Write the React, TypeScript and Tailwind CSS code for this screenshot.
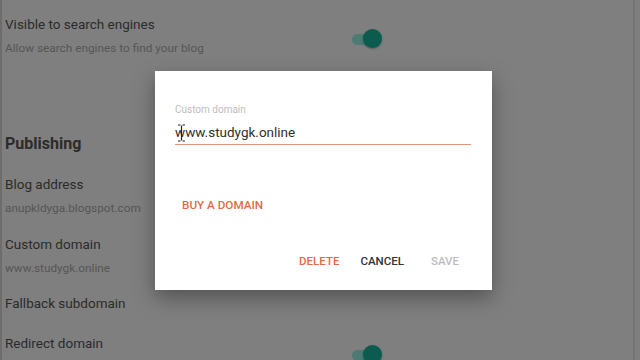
import React from 'react'

type SettingRowProps = {
  title: string
  subtitle?: string
  className?: string
}

function SettingRow({ title, subtitle, className = '' }: SettingRowProps) {
  return (
    <div className={`flex flex-col ${className}`}>
      <p className="text-[13.5px] leading-[20px] text-[#2b2b2b]">{title}</p>
      {subtitle && <p className="mt-[4px] text-[11.8px] leading-[20px] text-[#565656]">{subtitle}</p>}
    </div>
  )
}

function Toggle() {
  return (
    <div className="relative w-[31px] h-[20px] shrink-0">
      <div className="absolute left-[1px] top-[5px] w-[24px] h-[11px] rounded-full bg-[#4b7b72]" />
      <div className="absolute right-0 top-0 w-[19px] h-[19px] rounded-full bg-[#0b5c4f] shadow-[0_1px_2px_rgba(0,0,0,0.3)]" />
    </div>
  )
}

function TextCursor() {
  return (
    <svg className="absolute left-[2px] top-[4px]" width="9" height="18" viewBox="0 0 9 18">
      <path d="M1 1h2.5M5.5 1H8M4.5 1.5v15M1 17h2.5M5.5 17H8" stroke="#222" strokeWidth="1.2" fill="none" />
    </svg>
  )
}

export default function App() {
  return (
    <div
      className="relative w-[640px] h-[360px] overflow-hidden bg-[#7f7f7f] border-l-2 border-[#6d6d6d]"
      style={{ fontFamily: 'Roboto, "Noto Sans", sans-serif' }}
    >
      {/* page behind the overlay */}
      <div className="w-[633px] h-full border-r-2 border-[#747474] flex flex-col pl-[3px]">
        <div className="w-[377px] flex items-start justify-between pt-[14px]">
          <SettingRow title="Visible to search engines" subtitle="Allow search engines to find your blog" />
          <div className="mt-[15px]">
            <Toggle />
          </div>
        </div>

        <div className="mt-[31px] h-px bg-[#747474] w-[520px]" />

        <h2 className="mt-[44px] text-[16px] leading-[22px] font-bold text-[#2b2b2b]">Publishing</h2>

        <SettingRow className="mt-[19px]" title="Blog address" subtitle="anupkldyga.blogspot.com" />
        <SettingRow className="mt-[16px]" title="Custom domain" subtitle="www.studygk.online" />
        <SettingRow className="mt-[15px]" title="Fallback subdomain" />

        <div className="w-[377px] flex items-start justify-between mt-[20px]">
          <SettingRow title="Redirect domain" />
          <div className="mt-[12px]">
            <Toggle />
          </div>
        </div>
      </div>

      {/* dialog */}
      <div className="absolute left-[153px] top-[71px] w-[337px] h-[219px] bg-white shadow-[0_8px_20px_rgba(0,0,0,0.35)] flex flex-col pl-[20px] pr-[21px]">
        <label className="mt-[33px] text-[10px] leading-[12px] text-[#bdbdbd]">Custom domain</label>
        <div className="relative mt-[4px] border-b border-[#dc9a7a]">
          <TextCursor />
          <span className="text-[13.5px] leading-[20px] text-[#2f2f2f]">www.studygk.online</span>
        </div>

        <button className="self-start mt-[52px] ml-[7px] text-[11.7px] leading-[16px] font-medium text-[#df6c47]">
          BUY A DOMAIN
        </button>

        <div className="mt-[40px] flex justify-end items-center gap-[21px] pr-[12px] text-[11.5px] leading-[16px] font-medium">
          <button className="text-[#df6c47]">DELETE</button>
          <button className="text-[#333333]">CANCEL</button>
          <button className="text-[#bdbdbd] ml-[6px]">SAVE</button>
        </div>
      </div>
    </div>
  )
}
